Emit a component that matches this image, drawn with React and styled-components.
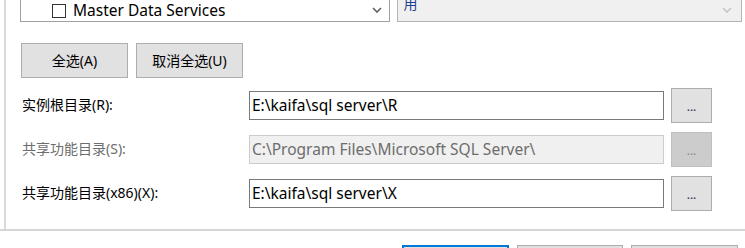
import * as React from 'react';
import styled, { createGlobalStyle } from 'styled-components';

const GlobalStyle = createGlobalStyle`
	html, body {
		margin: 0;
		padding: 0;
		background: #ffffff;
	}
	body {
		font-family: "Noto Sans", "Noto Sans CJK SC", sans-serif;
		font-size: 14px;
		color: #000000;
	}
`;

const Window = styled.div`
	width: 745px;
	height: 248px;
	overflow: hidden;
	display: flex;
	flex-direction: column;
	background: #ffffff;
`;

const Panel = styled.div`
	flex-shrink: 0;
	margin-left: 4px;
	border-left: 2px solid #d9d9d9;
	height: 229px;
	display: flex;
	flex-direction: column;
	box-sizing: border-box;
`;

const ComboRow = styled.div`
	display: flex;
	gap: 7px;
	margin-top: -9px;
	padding-left: 14px;
	padding-right: 3px;
`;

const Combo = styled.div`
	position: relative;
	box-sizing: border-box;
	height: 31px;
	width: ${(p) => p.$width}px;
	border: 1px solid ${(p) => (p.$disabled ? '#b4b4b4' : '#a0a0a0')};
	background: ${(p) => (p.$disabled ? '#f0f0f0' : '#ffffff')};
	display: flex;
	align-items: center;
	padding-left: ${(p) => p.$indent}px;
	padding-top: ${(p) => p.$shift}px;
	line-height: 1;
	overflow: hidden;
`;

const ComboText = styled.span`
	color: ${(p) => (p.$muted ? '#1f3f8f' : '#000000')};
	font-size: ${(p) => (p.$muted ? 14 : 15.5)}px;
	margin-top: ${(p) => (p.$muted ? -6 : 0)}px;
	white-space: nowrap;
`;

const Check = styled.span`
	display: inline-block;
	box-sizing: border-box;
	width: 14px;
	height: 14px;
	border: 1px solid #333333;
	background: #ffffff;
	margin-right: 7px;
`;

const Arrow = styled.svg`
	position: absolute;
	right: ${(p) => p.$right}px;
	top: 15px;
`;

const ActionRow = styled.div`
	display: flex;
	gap: 8px;
	margin-top: 21px;
	padding-left: 15px;
`;

const Button = styled.div`
	flex-shrink: 0;
	box-sizing: border-box;
	width: ${(p) => p.$width}px;
	height: 35px;
	border: ${(p) => (p.$primary ? '2px solid #0078d7' : '1px solid #adadad')};
	background: #e1e1e1;
	display: flex;
	align-items: center;
	justify-content: center;
	white-space: nowrap;
	line-height: 1;
`;

const Form = styled.div`
	display: grid;
	grid-template-columns: 220px 415px 41px;
	grid-auto-rows: 35px;
	column-gap: 7px;
	row-gap: 9px;
	margin-top: 10px;
	padding-left: 16px;
	align-items: center;
`;

const Label = styled.div`
	color: ${(p) => (p.$disabled ? '#6d6d6d' : '#000000')};
	white-space: nowrap;
	margin-top: -3px;
`;

const PathInput = styled.div`
	box-sizing: border-box;
	height: 29px;
	border: 1px solid ${(p) => (p.$disabled ? '#cccccc' : '#7a7a7a')};
	background: ${(p) => (p.$disabled ? '#f0f0f0' : '#ffffff')};
	color: ${(p) => (p.$disabled ? '#6d6d6d' : '#000000')};
	font-size: 15.5px;
	display: flex;
	align-items: center;
	padding-left: 2px;
	white-space: nowrap;
	overflow: hidden;
	line-height: 1;
`;

const Browse = styled.div`
	box-sizing: border-box;
	height: 35px;
	border: 1px solid ${(p) => (p.$disabled ? '#bfbfbf' : '#adadad')};
	background: ${(p) => (p.$disabled ? '#cccccc' : '#e1e1e1')};
	color: ${(p) => (p.$disabled ? '#8a8a8a' : '#303040')};
	display: flex;
	align-items: center;
	justify-content: center;
	padding-top: 3px;
	font-size: 12px;
	line-height: 1;
`;

const Footer = styled.div`
	flex-shrink: 0;
	border-top: 2px solid #d5d5d5;
	display: flex;
	justify-content: flex-end;
	gap: 8px;
	padding: 14px 7px 0 0;
`;

const Chevron = ({ color, right }) => (
	<Arrow $right={right} width="10" height="6" viewBox="0 0 10 6">
		<path d="M1 1 L5 5 L9 1" fill="none" stroke={color} strokeWidth="1.6" />
	</Arrow>
);

const rows = [
	{ label: '实例根目录(R):', value: 'E:\\kaifa\\sql server\\R' },
	{ label: '共享功能目录(S):', value: 'C:\\Program Files\\Microsoft SQL Server\\', disabled: true },
	{ label: '共享功能目录(x86)(X):', value: 'E:\\kaifa\\sql server\\X' },
];

export default function App() {
	return (
		<Window>
			<GlobalStyle />
			<Panel>
				<ComboRow>
					<Combo $width={370} $indent={31} $shift={8}>
						<Check />
						<ComboText>Master Data Services</ComboText>
						<Chevron color="#606060" right={7} />
					</Combo>
					<Combo $width={346} $indent={6} $shift={0} $disabled>
						<ComboText $muted>用</ComboText>
						<Chevron color="#c4c4c4" right={9} />
					</Combo>
				</ComboRow>
				<ActionRow>
					<Button $width={107}>全选(A)</Button>
					<Button $width={107}>取消全选(U)</Button>
				</ActionRow>
				<Form>
					{rows.map((row) => (
						<React.Fragment key={row.label}>
							<Label $disabled={row.disabled}>{row.label}</Label>
							<PathInput $disabled={row.disabled}>{row.value}</PathInput>
							<Browse $disabled={row.disabled}>...</Browse>
						</React.Fragment>
					))}
				</Form>
			</Panel>
			<Footer>
				<Button $width={107} $primary />
				<Button $width={106} />
				<Button $width={107} />
			</Footer>
		</Window>
	);
}
